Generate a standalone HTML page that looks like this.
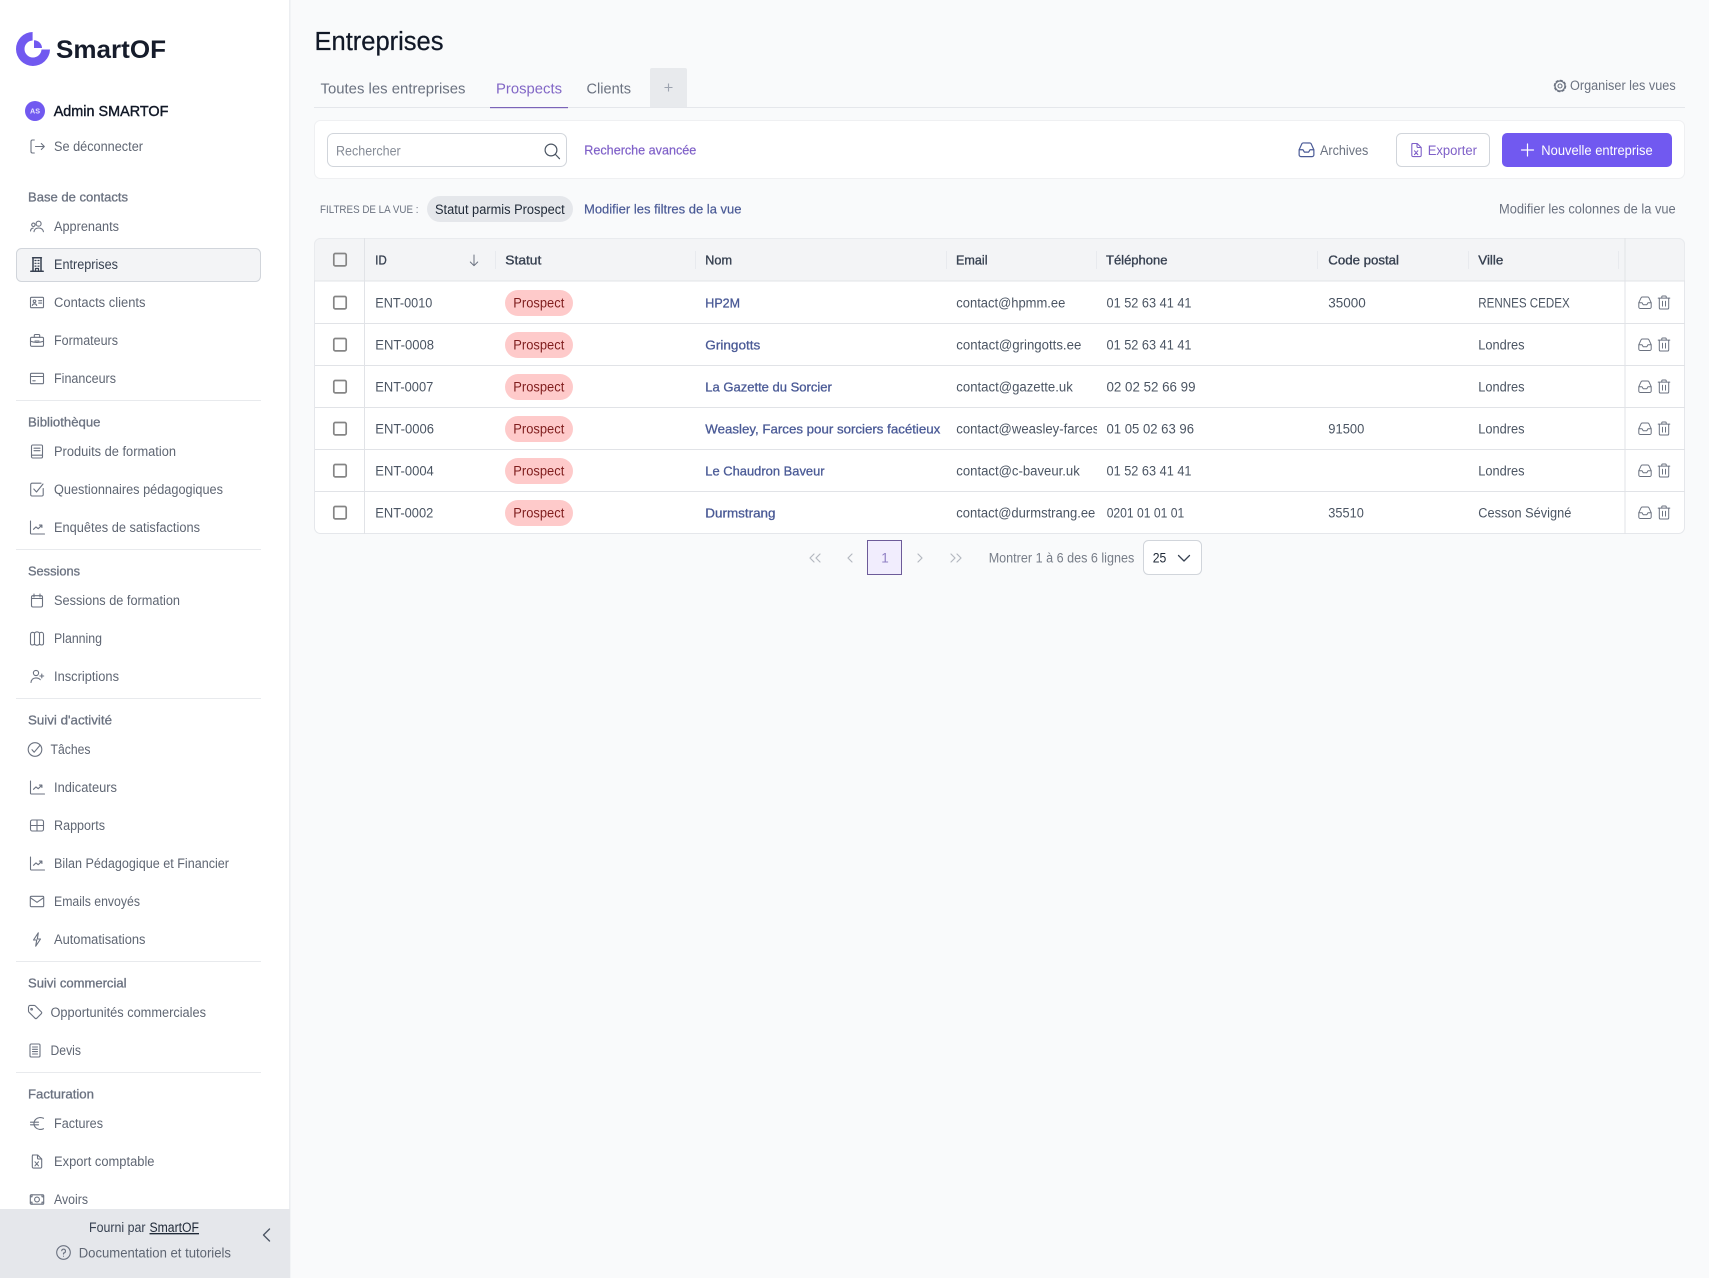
<!DOCTYPE html>
<html lang="fr"><head><meta charset="utf-8"><title>Entreprises</title>
<style>
html,body{margin:0;padding:0;width:1709px;height:1278px;overflow:hidden;background:#f9fafb}
svg{display:block}
text{font-family:"Liberation Sans",sans-serif;white-space:pre}
.n{font-size:13.5px;fill:#5f6673}
.s{font-size:12.8px;fill:#6b7280;stroke:#6b7280;stroke-width:.3}
.c{font-size:13.5px;fill:#4b5563}
.h{font-size:13px;fill:#374151;stroke:#374151;stroke-width:.35}
.l{font-size:13px;fill:#4a5a96;stroke:#4a5a96;stroke-width:.3}
.b{font-size:13.5px;fill:#7f1d1d}
.i{fill:none;stroke:#6b7280;stroke-width:1.1;stroke-linecap:round;stroke-linejoin:round}
</style></head><body>
<svg xmlns="http://www.w3.org/2000/svg" width="1709" height="1278" viewBox="0 0 1709 1278">
<defs>
<clipPath id="side"><rect x="0" y="0" width="289" height="1209"/></clipPath>
<clipPath id="em"><rect x="950" y="410" width="147" height="40"/></clipPath>
<symbol id="inbox" viewBox="0 0 16 16"><path d="M1.8 8.2 4 3.4A1.5 1.5 0 0 1 5.4 2.5h5.200A1.500 1.500 0 0 1 12 3.400l2.200 4.800V12.500A1.500 1.500 0 0 1 12.700 14H3.300a1.500 1.500 0 0 1-1.500-1.500zM1.800 8.200H5l1.200 2h3.600l1.200-2h3.200"/></symbol>
<symbol id="trash" viewBox="0 0 16 16"><path d="M2.200 3.600h11.600M5.800 3.600V2.300a.8.8 0 0 1 .8-.8h2.800a.8.8 0 0 1 .8.8v1.300M3.300 3.600v9.600a1.300 1.300 0 0 0 1.300 1.300h6.800a1.300 1.300 0 0 0 1.300-1.300V3.600M6.500 6.800v4.800M9.500 6.800v4.800"/></symbol>
<symbol id="chart" viewBox="0 0 16 16"><path d="M1.500 1.500v12.300a.7.7 0 0 0 .7.7h13.300M4.500 9.800 7 7.400l2.200 1.800 3.600-3.400M10.400 5.600h2.500v2.400"/></symbol>
</defs>

<!-- sidebar -->
<rect x="0" y="0" width="289" height="1278" fill="#fff"/>
<rect x="289" y="0" width="1.500" height="1278" fill="#eceef1"/>

<!-- logo -->
<path d="M32.600 32A17 17 0 1 0 50 49.500H41.500A8.500 8.500 0 1 1 32.600 40.500z" fill="#7159f0"/>
<path d="M34 40.200A8 8 0 0 1 42 48H34z" fill="#7159f0"/>
<text x="56" y="58" font-size="25" font-weight="700" textLength="110" lengthAdjust="spacingAndGlyphs" fill="#161c2b">SmartOF</text>

<circle cx="35" cy="111" r="10" fill="#7159f0"/>
<text x="30" y="113.700" font-size="7.500" font-weight="700" fill="#e9e6ff" textLength="10" lengthAdjust="spacingAndGlyphs">AS</text>
<text x="53.700" y="116" font-size="14.600" fill="#111827" stroke="#111827" stroke-width=".4" textLength="114.700" lengthAdjust="spacingAndGlyphs">Admin SMARTOF</text>

<!-- active item -->
<rect x="16.500" y="248.500" width="244" height="33" rx="5" fill="#f3f4f6" stroke="#d1d5db"/>

<g clip-path="url(#side)">
<text class="n" x="54" y="151" textLength="89" lengthAdjust="spacingAndGlyphs">Se déconnecter</text>
<text class="s" x="28" y="201.500" textLength="100" lengthAdjust="spacingAndGlyphs">Base de contacts</text>
<text class="n" x="54" y="231" textLength="65" lengthAdjust="spacingAndGlyphs">Apprenants</text>
<text x="54" y="269" font-size="13.500" fill="#374151" textLength="64" lengthAdjust="spacingAndGlyphs">Entreprises</text>
<text class="n" x="54" y="307" textLength="91.500" lengthAdjust="spacingAndGlyphs">Contacts clients</text>
<text class="n" x="54" y="345" textLength="64" lengthAdjust="spacingAndGlyphs">Formateurs</text>
<text class="n" x="54" y="383" textLength="62" lengthAdjust="spacingAndGlyphs">Financeurs</text>
<text class="s" x="28" y="426.500" textLength="72.500" lengthAdjust="spacingAndGlyphs">Bibliothèque</text>
<text class="n" x="54" y="456" textLength="122" lengthAdjust="spacingAndGlyphs">Produits de formation</text>
<text class="n" x="54" y="494" textLength="169" lengthAdjust="spacingAndGlyphs">Questionnaires pédagogiques</text>
<text class="n" x="54" y="532" textLength="146" lengthAdjust="spacingAndGlyphs">Enquêtes de satisfactions</text>
<text class="s" x="28" y="575.500" textLength="52" lengthAdjust="spacingAndGlyphs">Sessions</text>
<text class="n" x="54" y="605" textLength="126" lengthAdjust="spacingAndGlyphs">Sessions de formation</text>
<text class="n" x="54" y="643" textLength="48" lengthAdjust="spacingAndGlyphs">Planning</text>
<text class="n" x="54" y="681" textLength="65" lengthAdjust="spacingAndGlyphs">Inscriptions</text>
<text class="s" x="28" y="724.500" textLength="84" lengthAdjust="spacingAndGlyphs">Suivi d'activité</text>
<text class="n" x="50.500" y="754" textLength="40" lengthAdjust="spacingAndGlyphs">Tâches</text>
<text class="n" x="54" y="792" textLength="63" lengthAdjust="spacingAndGlyphs">Indicateurs</text>
<text class="n" x="54" y="830" textLength="51" lengthAdjust="spacingAndGlyphs">Rapports</text>
<text class="n" x="54" y="868" textLength="175" lengthAdjust="spacingAndGlyphs">Bilan Pédagogique et Financier</text>
<text class="n" x="54" y="906" textLength="86" lengthAdjust="spacingAndGlyphs">Emails envoyés</text>
<text class="n" x="54" y="944" textLength="91.500" lengthAdjust="spacingAndGlyphs">Automatisations</text>
<text class="s" x="28" y="987.500" textLength="98.500" lengthAdjust="spacingAndGlyphs">Suivi commercial</text>
<text class="n" x="50.500" y="1017" textLength="155.500" lengthAdjust="spacingAndGlyphs">Opportunités commerciales</text>
<text class="n" x="50.500" y="1055" textLength="30.500" lengthAdjust="spacingAndGlyphs">Devis</text>
<text class="s" x="28" y="1098.500" textLength="66" lengthAdjust="spacingAndGlyphs">Facturation</text>
<text class="n" x="54" y="1128" textLength="49" lengthAdjust="spacingAndGlyphs">Factures</text>
<text class="n" x="54" y="1166" textLength="100.500" lengthAdjust="spacingAndGlyphs">Export comptable</text>
<text class="n" x="54" y="1204" textLength="34" lengthAdjust="spacingAndGlyphs">Avoirs</text>

<!-- dividers -->
<g fill="#e8eaed">
<rect x="16" y="400" width="245" height="1"/><rect x="16" y="549" width="245" height="1"/><rect x="16" y="698" width="245" height="1"/><rect x="16" y="961" width="245" height="1"/><rect x="16" y="1072" width="245" height="1"/>
</g>

<!-- nav icons -->
<g class="i">
<path transform="translate(29 138.500)" d="M5.300 1.500H3.400A1.500 1.500 0 0 0 2 3v10a1.500 1.500 0 0 0 1.400 1.500h1.900M6.500 8h8.700M12.300 5l3 3-3 3"/>
<g transform="translate(29 218.500)"><circle cx="9.600" cy="5.200" r="2.500"/><path d="M5 13.200c.4-2.400 2.200-3.700 4.600-3.700s4.300 1.300 4.800 3.700"/><circle cx="4.400" cy="6.300" r="1.700"/><path d="M1.500 12.500c.2-1.700 1.200-2.700 2.700-2.900"/></g>
<g transform="translate(29 256.500)" style="stroke:#374151;stroke-width:1.500"><path d="M1.800 14.700h12.400M3.600 1.300h8.800M4 1.300v13.400M12 1.300v13.400"/><path stroke-width="1.200" d="M6 4h1M9 4h1M6 6.800h1M9 6.800h1M6 9.600h1M9 9.600h1M6.500 14v-2h3v2"/></g>
<g transform="translate(29 294.500)"><rect x="1.500" y="2.800" width="13" height="10.400" rx="1"/><circle cx="5.500" cy="6.800" r="1.300"/><path d="M3.300 11c.3-1.200 1.100-1.700 2.200-1.700s1.900.5 2.200 1.700M9.700 6.200h3M9.700 8.600h3"/></g>
<g transform="translate(29 332.500)"><rect x="1.500" y="4.800" width="13" height="9" rx="1.200"/><path d="M5.300 4.800V3a1 1 0 0 1 1-1h3.400a1 1 0 0 1 1 1v1.800M1.500 8.800c2 .8 4 1.100 6.500 1.100s4.500-.3 6.500-1.100M6 8.500h4"/></g>
<g transform="translate(29 370.500)"><rect x="1.500" y="2.800" width="13" height="10.400" rx="1"/><path d="M1.500 6h13M3.800 10.300h2.400"/></g>
<g transform="translate(29 443.500)"><rect x="2.500" y="1.500" width="11" height="13" rx="1.200"/><path d="M5 4.700h6M5 7.200h6M2.500 11.700h11"/></g>
<g transform="translate(29 481.500)"><path d="M14.200 7v6.200a1.300 1.300 0 0 1-1.300 1.300H3a1.300 1.300 0 0 1-1.300-1.300V3A1.300 1.300 0 0 1 3 1.700h9"/><path d="M4.800 7.500l2.700 3 6.500-8"/></g>
<use href="#chart" x="29" y="519.500" width="16" height="16"/>
<g transform="translate(29 592.500)"><rect x="2.500" y="3.200" width="11" height="11.300" rx="1.500"/><path d="M5 1.500v3M11 1.500v3M2.500 6h11"/></g>
<g transform="translate(29 630.500)"><path d="M1.500 4c0-1.200.8-2.200 2-2.200s2 .7 2 .7 1.200-1.200 2.500-1.200 2.500 1.200 2.500 1.200.9-.7 2-.7 2 1 2 2.200v8.800c0 1.100-.9 1.700-2 1.700s-2-.9-2-.9-1.200 1.200-2.500 1.200-2.500-1.200-2.500-1.200-.9.9-2 .9-2-.6-2-1.700zM5.500 2.500v11.600M10.500 2.500v11.600"/></g>
<g transform="translate(29 668.500)"><circle cx="7" cy="4.500" r="2.600"/><path d="M2 14c.3-3 2.300-4.600 5-4.600 1.900 0 3.300.6 4.300 1.800M12.800 5.600v3.800M10.900 7.500h3.800"/></g>
<g transform="translate(27 741.500)"><circle cx="8" cy="8" r="6.800"/><path d="M5 8.200l2.200 2.500 5.600-6.700"/></g>
<use href="#chart" x="29" y="779.500" width="16" height="16"/>
<g transform="translate(29 817.500)"><rect x="1.500" y="2.500" width="13" height="11" rx="1.800"/><path d="M1.500 8h13M8 2.500v11"/></g>
<use href="#chart" x="29" y="855.500" width="16" height="16"/>
<g transform="translate(29 893.500)"><rect x="1.300" y="2.800" width="13.400" height="10.400" rx="1"/><path d="M1.500 4.300 8 8.800l6.500-4.500"/></g>
<path transform="translate(29 931.500)" d="M9.300 1.300 4.500 8.500h3.200L6.700 14.700l4.800-7.200H8.300z"/>
<g transform="translate(27 1004.500)"><path d="M1.500 2.700v4a1.500 1.500 0 0 0 .5 1l6 6a1.300 1.300 0 0 0 1.800 0l4.500-4.500a1.300 1.300 0 0 0 0-1.800l-6-6a1.500 1.500 0 0 0-1-.5h-4.300a1.200 1.200 0 0 0-1.200 1.200z"/><circle cx="4.600" cy="4.700" r=".8"/></g>
<g transform="translate(27 1042.500)"><rect x="3" y="1.500" width="10" height="13" rx="1.200"/><path d="M5.500 4.500h5M5.500 6.800h5M5.500 9.100h5M5.500 11.500h5"/></g>
<g transform="translate(29 1115.500)"><path d="M14.500 2.800A7 7 0 0 0 6.500 4a6 6 0 0 0 0 8 7 7 0 0 0 8 1.200M1.500 6.700h8M1.500 9.300h8"/></g>
<g transform="translate(29 1153.500)"><path d="M3.500 1.500h5.200l4 4v7.800a1.300 1.300 0 0 1-1.300 1.300H4.600a1.300 1.300 0 0 1-1.300-1.300V2.700a1.300 1.300 0 0 1 1.200-1.200zM8.500 1.500v3a1 1 0 0 0 1 1h3.200M6 8.300l3.500 4M9.500 8.300 6 12.300"/></g>
<g transform="translate(29 1191.500)"><rect x="1.300" y="3.300" width="13.400" height="9.400" rx="1"/><circle cx="8" cy="8" r="2.400"/><path d="M1.500 5.300h1.500v-2M13 3.500v1.800h1.500M1.500 10.700h1.500v2M13 12.500v-1.800h1.500"/></g>
</g>
</g>

<!-- sidebar footer -->
<rect x="0" y="1209" width="290" height="69" fill="#e5e7eb"/>
<text x="89" y="1232" font-size="13.500" fill="#374151" textLength="56.500" lengthAdjust="spacingAndGlyphs">Fourni par</text>
<text x="149.500" y="1232" font-size="13.500" fill="#1f2937" textLength="49.500" lengthAdjust="spacingAndGlyphs" text-decoration="underline">SmartOF</text>
<text x="78.700" y="1257.500" font-size="13.500" fill="#5f6673" textLength="152.300" lengthAdjust="spacingAndGlyphs">Documentation et tutoriels</text>
<g class="i" transform="translate(55.500 1244.500)"><circle cx="8" cy="8" r="6.800"/><path d="M6.200 6.200A1.900 1.900 0 1 1 8 8.500v1.100M8 11.700v.1"/></g>
<path d="M269.500 1229l-6 6 6 6" fill="none" stroke="#4b5563" stroke-width="1.400" stroke-linecap="round" stroke-linejoin="round"/>

<!-- main header -->
<text x="314.500" y="50" font-size="25.500" fill="#111827" stroke="#111827" stroke-width=".25" textLength="129" lengthAdjust="spacingAndGlyphs">Entreprises</text>
<rect x="314" y="107" width="1371" height="1" fill="#e5e7eb"/>
<text x="320.500" y="93.500" font-size="15" fill="#6b7280" textLength="145" lengthAdjust="spacingAndGlyphs">Toutes les entreprises</text>
<text x="496" y="93.500" font-size="15" fill="#8267c6" textLength="66" lengthAdjust="spacingAndGlyphs">Prospects</text>
<rect x="490" y="107" width="78" height="1.200" fill="#7b64b8"/>
<text x="586.500" y="93.500" font-size="15" fill="#6b7280" textLength="44.500" lengthAdjust="spacingAndGlyphs">Clients</text>
<path d="M650 107V70a2 2 0 0 1 2-2h33a2 2 0 0 1 2 2v37z" fill="#e8eaed"/>
<path d="M668.500 83.500v8M664.500 87.500h8" stroke="#9ca3af" stroke-width="1.100"/>
<g class="i" transform="translate(1552 78)"><circle cx="8" cy="8" r="2"/><circle cx="8" cy="8" r="4.900"/><circle cx="8" cy="8" r="5.600" stroke-width="1.300" stroke-dasharray="2.200 2.200"/></g>
<text x="1570" y="90" font-size="13.500" fill="#6b7280" textLength="105.700" lengthAdjust="spacingAndGlyphs">Organiser les vues</text>

<!-- toolbar -->
<rect x="314.500" y="120.500" width="1370" height="58" rx="6" fill="#fff" stroke="#eff0f2"/>
<rect x="327.500" y="133.500" width="239" height="33" rx="6" fill="#fff" stroke="#d1d5db"/>
<text x="336" y="155.500" font-size="13.500" fill="#868c97" textLength="64.700" lengthAdjust="spacingAndGlyphs">Rechercher</text>
<g fill="none" stroke="#4b5563" stroke-width="1.200" stroke-linecap="round"><circle cx="551" cy="150" r="5.900"/><path d="M555.500 154.500l4 4.200"/></g>
<text x="584.300" y="154.500" font-size="13" fill="#7f60c8" stroke="#7f60c8" stroke-width=".2" textLength="112" lengthAdjust="spacingAndGlyphs">Recherche avancée</text>

<use href="#inbox" x="1297" y="140" width="19" height="19" fill="none" stroke="#4a5a96" stroke-width="1" stroke-linecap="round" stroke-linejoin="round"/>
<text x="1320" y="154.800" font-size="13.500" fill="#6b7280" textLength="48.300" lengthAdjust="spacingAndGlyphs">Archives</text>

<rect x="1396.500" y="133.500" width="93" height="33" rx="5" fill="#fff" stroke="#d1d5db"/>
<g fill="none" stroke="#7f60c8" stroke-width="1.100" stroke-linejoin="round" stroke-linecap="round" transform="translate(1408.500 142)"><path d="M3.500 1.500h5.200l4 4v7.800a1.300 1.300 0 0 1-1.300 1.300H4.600a1.300 1.300 0 0 1-1.300-1.300V2.700a1.300 1.300 0 0 1 1.200-1.200zM8.500 1.500v3a1 1 0 0 0 1 1h3.200M6 8.800l3.300 3.800M9.300 8.800 6 12.600"/></g>
<text x="1427.700" y="154.800" font-size="13.500" fill="#7f60c8" textLength="49.300" lengthAdjust="spacingAndGlyphs">Exporter</text>

<rect x="1502" y="133" width="170" height="34" rx="5" fill="#7159f0"/>
<path d="M1527.500 144v12M1521.500 150h12" stroke="#fff" stroke-width="1.200" stroke-linecap="round"/>
<text x="1541.300" y="154.800" font-size="13.500" fill="#fff" textLength="111.400" lengthAdjust="spacingAndGlyphs">Nouvelle entreprise</text>

<!-- filters -->
<text x="320" y="212.800" font-size="10.600" fill="#6b7280" textLength="98.500" lengthAdjust="spacingAndGlyphs">FILTRES DE LA VUE :</text>
<rect x="427" y="196" width="146" height="26" rx="13" fill="#e5e7eb"/>
<text x="435" y="213.800" font-size="13.500" fill="#1f2937" textLength="129.700" lengthAdjust="spacingAndGlyphs">Statut parmis Prospect</text>
<text x="584" y="213.500" font-size="13" fill="#4a5a96" stroke="#4a5a96" stroke-width=".2" textLength="157.500" lengthAdjust="spacingAndGlyphs">Modifier les filtres de la vue</text>
<text x="1499" y="213.500" font-size="13.500" fill="#6b7280" textLength="176.700" lengthAdjust="spacingAndGlyphs">Modifier les colonnes de la vue</text>

<!-- table -->
<rect x="314.500" y="238.500" width="1370" height="295" rx="6" fill="#fff" stroke="#e5e7eb"/>
<path d="M314.500 281V244.500a6 6 0 0 1 6-6H1678.500a6 6 0 0 1 6 6V281z" fill="#f3f4f6" stroke="#e9ebee"/>
<g fill="#e1e3e7">
<rect x="314" y="280.500" width="1371" height="1"/>
<rect x="315" y="323" width="1370" height="1"/><rect x="315" y="365" width="1370" height="1"/><rect x="315" y="407" width="1370" height="1"/><rect x="315" y="449" width="1370" height="1"/><rect x="315" y="491" width="1370" height="1"/>
<rect x="364" y="238" width="1" height="296"/><rect x="1624.500" y="238" width="1" height="296"/>
</g>
<g fill="#e8eaee">
<rect x="495" y="251" width="1" height="18"/><rect x="695" y="251" width="1" height="18"/><rect x="946" y="251" width="1" height="18"/><rect x="1096" y="251" width="1" height="18"/><rect x="1317" y="251" width="1" height="18"/><rect x="1468" y="251" width="1" height="18"/><rect x="1618" y="251" width="1" height="18"/>
</g>

<!-- header text -->
<text class="h" x="375.300" y="264.500" textLength="11.400" lengthAdjust="spacingAndGlyphs">ID</text>
<path d="M474 255v10.500M470.300 262l3.700 3.700 3.700-3.700" fill="none" stroke="#6b7280" stroke-width="1" stroke-linecap="round" stroke-linejoin="round"/>
<text class="h" x="505.300" y="264.500" textLength="36" lengthAdjust="spacingAndGlyphs">Statut</text>
<text class="h" x="705.300" y="264.500" textLength="26.700" lengthAdjust="spacingAndGlyphs">Nom</text>
<text class="h" x="956" y="264.500" textLength="31.500" lengthAdjust="spacingAndGlyphs">Email</text>
<text class="h" x="1106" y="264.500" textLength="61.500" lengthAdjust="spacingAndGlyphs">Téléphone</text>
<text class="h" x="1328.300" y="264.500" textLength="70.700" lengthAdjust="spacingAndGlyphs">Code postal</text>
<text class="h" x="1478.300" y="264.500" textLength="25" lengthAdjust="spacingAndGlyphs">Ville</text>

<!-- checkboxes -->
<g fill="#fff" stroke="#858585" stroke-width="1.700">
<rect x="333.800" y="253.500" width="12.400" height="12.400" rx="1.500" fill="#f3f4f6"/>
<rect x="333.800" y="296.500" width="12.400" height="12.400" rx="1.500"/>
<rect x="333.800" y="338.500" width="12.400" height="12.400" rx="1.500"/>
<rect x="333.800" y="380.500" width="12.400" height="12.400" rx="1.500"/>
<rect x="333.800" y="422.500" width="12.400" height="12.400" rx="1.500"/>
<rect x="333.800" y="464.500" width="12.400" height="12.400" rx="1.500"/>
<rect x="333.800" y="506.500" width="12.400" height="12.400" rx="1.500"/>
</g>

<!-- badges -->
<g fill="#fecaca">
<rect x="505" y="290" width="68" height="26" rx="13"/><rect x="505" y="332" width="68" height="26" rx="13"/><rect x="505" y="374" width="68" height="26" rx="13"/><rect x="505" y="416" width="68" height="26" rx="13"/><rect x="505" y="458" width="68" height="26" rx="13"/><rect x="505" y="500" width="68" height="26" rx="13"/>
</g>

<!-- row 1 -->
<text class="c" x="375.300" y="307.700" textLength="57" lengthAdjust="spacingAndGlyphs">ENT-0010</text>
<text class="b" x="513.300" y="307.700" textLength="51" lengthAdjust="spacingAndGlyphs">Prospect</text>
<text class="l" x="705.300" y="307.500" textLength="34.700" lengthAdjust="spacingAndGlyphs">HP2M</text>
<text class="c" x="956.300" y="307.700" textLength="109" lengthAdjust="spacingAndGlyphs">contact@hpmm.ee</text>
<text class="c" x="1106.500" y="307.700" textLength="85" lengthAdjust="spacingAndGlyphs">01 52 63 41 41</text>
<text class="c" x="1328.300" y="307.700" textLength="37.500" lengthAdjust="spacingAndGlyphs">35000</text>
<text class="c" x="1478.300" y="307.700" textLength="91.400" lengthAdjust="spacingAndGlyphs">RENNES CEDEX</text>
<!-- row 2 -->
<text class="c" x="375.300" y="349.700" textLength="58.700" lengthAdjust="spacingAndGlyphs">ENT-0008</text>
<text class="b" x="513.300" y="349.700" textLength="51" lengthAdjust="spacingAndGlyphs">Prospect</text>
<text class="l" x="705.300" y="349.500" textLength="55" lengthAdjust="spacingAndGlyphs">Gringotts</text>
<text class="c" x="956.300" y="349.700" textLength="125" lengthAdjust="spacingAndGlyphs">contact@gringotts.ee</text>
<text class="c" x="1106.500" y="349.700" textLength="85" lengthAdjust="spacingAndGlyphs">01 52 63 41 41</text>
<text class="c" x="1478.300" y="349.700" textLength="46.300" lengthAdjust="spacingAndGlyphs">Londres</text>
<!-- row 3 -->
<text class="c" x="375.300" y="391.700" textLength="58" lengthAdjust="spacingAndGlyphs">ENT-0007</text>
<text class="b" x="513.300" y="391.700" textLength="51" lengthAdjust="spacingAndGlyphs">Prospect</text>
<text class="l" x="705.300" y="391.500" textLength="126.500" lengthAdjust="spacingAndGlyphs">La Gazette du Sorcier</text>
<text class="c" x="956.300" y="391.700" textLength="116.500" lengthAdjust="spacingAndGlyphs">contact@gazette.uk</text>
<text class="c" x="1106.500" y="391.700" textLength="89" lengthAdjust="spacingAndGlyphs">02 02 52 66 99</text>
<text class="c" x="1478.300" y="391.700" textLength="46.300" lengthAdjust="spacingAndGlyphs">Londres</text>
<!-- row 4 -->
<text class="c" x="375.300" y="433.700" textLength="58.700" lengthAdjust="spacingAndGlyphs">ENT-0006</text>
<text class="b" x="513.300" y="433.700" textLength="51" lengthAdjust="spacingAndGlyphs">Prospect</text>
<text class="l" x="705.300" y="433.500" textLength="235" lengthAdjust="spacingAndGlyphs">Weasley, Farces pour sorciers facétieux</text>
<g clip-path="url(#em)"><text class="c" x="956.300" y="433.700" textLength="143" lengthAdjust="spacingAndGlyphs">contact@weasley-farces</text></g>
<text class="c" x="1106.500" y="433.700" textLength="87.500" lengthAdjust="spacingAndGlyphs">01 05 02 63 96</text>
<text class="c" x="1328.300" y="433.700" textLength="36" lengthAdjust="spacingAndGlyphs">91500</text>
<text class="c" x="1478.300" y="433.700" textLength="46.300" lengthAdjust="spacingAndGlyphs">Londres</text>
<!-- row 5 -->
<text class="c" x="375.300" y="475.700" textLength="58.500" lengthAdjust="spacingAndGlyphs">ENT-0004</text>
<text class="b" x="513.300" y="475.700" textLength="51" lengthAdjust="spacingAndGlyphs">Prospect</text>
<text class="l" x="705.300" y="475.500" textLength="119.300" lengthAdjust="spacingAndGlyphs">Le Chaudron Baveur</text>
<text class="c" x="956.300" y="475.700" textLength="123.500" lengthAdjust="spacingAndGlyphs">contact@c-baveur.uk</text>
<text class="c" x="1106.500" y="475.700" textLength="85" lengthAdjust="spacingAndGlyphs">01 52 63 41 41</text>
<text class="c" x="1478.300" y="475.700" textLength="46.300" lengthAdjust="spacingAndGlyphs">Londres</text>
<!-- row 6 -->
<text class="c" x="375.300" y="517.700" textLength="58" lengthAdjust="spacingAndGlyphs">ENT-0002</text>
<text class="b" x="513.300" y="517.700" textLength="51" lengthAdjust="spacingAndGlyphs">Prospect</text>
<text class="l" x="705.300" y="517.500" textLength="70.200" lengthAdjust="spacingAndGlyphs">Durmstrang</text>
<text class="c" x="956.300" y="517.700" textLength="139" lengthAdjust="spacingAndGlyphs">contact@durmstrang.ee</text>
<text class="c" x="1106.700" y="517.700" textLength="77.600" lengthAdjust="spacingAndGlyphs">0201 01 01 01</text>
<text class="c" x="1328.300" y="517.700" textLength="35.500" lengthAdjust="spacingAndGlyphs">35510</text>
<text class="c" x="1478.300" y="517.700" textLength="93" lengthAdjust="spacingAndGlyphs">Cesson Sévigné</text>

<!-- action icons -->
<g fill="none" stroke="#6b7280" stroke-width="1" stroke-linecap="round" stroke-linejoin="round">
<use href="#inbox" x="1637" y="294.500" width="16" height="16"/><use href="#trash" x="1656" y="294.500" width="16" height="16"/>
<use href="#inbox" x="1637" y="336.500" width="16" height="16"/><use href="#trash" x="1656" y="336.500" width="16" height="16"/>
<use href="#inbox" x="1637" y="378.500" width="16" height="16"/><use href="#trash" x="1656" y="378.500" width="16" height="16"/>
<use href="#inbox" x="1637" y="420.500" width="16" height="16"/><use href="#trash" x="1656" y="420.500" width="16" height="16"/>
<use href="#inbox" x="1637" y="462.500" width="16" height="16"/><use href="#trash" x="1656" y="462.500" width="16" height="16"/>
<use href="#inbox" x="1637" y="504.500" width="16" height="16"/><use href="#trash" x="1656" y="504.500" width="16" height="16"/>
</g>

<!-- pagination -->
<g fill="none" stroke="#b4b8c0" stroke-width="1.200" stroke-linecap="round" stroke-linejoin="round">
<path d="M814 554l-4 4 4 4M820 554l-4 4 4 4M852 554l-4 4 4 4M918 554l4 4-4 4M951 554l4 4-4 4M957 554l4 4-4 4"/>
</g>
<rect x="867.500" y="540.500" width="34" height="34" fill="#f1edfd" stroke="#6d5b99"/>
<text x="881.300" y="562.500" font-size="13.500" fill="#8f7fc4">1</text>
<text x="988.700" y="562.300" font-size="13.500" fill="#777d88" textLength="145.600" lengthAdjust="spacingAndGlyphs">Montrer 1 à 6 des 6 lignes</text>
<rect x="1143.500" y="540.500" width="58" height="34" rx="5" fill="#fff" stroke="#d1d5db"/>
<text x="1152.700" y="562.300" font-size="13.500" fill="#1f2937" textLength="13.600" lengthAdjust="spacingAndGlyphs">25</text>
<path d="M1178.500 555.500l5.500 5.500 5.500-5.500" fill="none" stroke="#374151" stroke-width="1.300" stroke-linecap="round" stroke-linejoin="round"/>
</svg>
</body></html>
